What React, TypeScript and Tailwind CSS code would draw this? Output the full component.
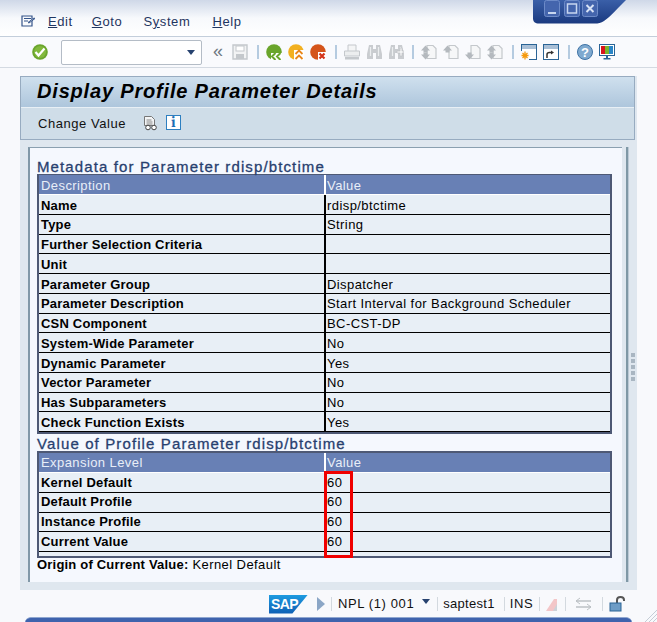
import React from "react";

const font = { fontFamily: '"Liberation Sans", Arial, sans-serif' };

function Sep({ className = "" }: { className?: string }) {
  return <div className={"w-[2px] h-[14px] bg-[#b5cbe0] shrink-0 " + className} />;
}

function Ico({ children, w = 16, h = 16, className = "" }: { children: React.ReactNode; w?: number; h?: number; className?: string }) {
  return (
    <svg width={w} height={h} viewBox={`0 0 ${w} ${h}`} className={"shrink-0 block " + className}>
      {children}
    </svg>
  );
}

const G = "#c4c8cc";

function PageArrow({ up, down, both }: { up?: boolean; down?: boolean; both?: boolean }) {
  return (
    <Ico>
      <path d="M6 1.500h6l3 3v10H6z" fill="#f6f7f8" stroke={G} strokeWidth="1.200" />
      {(up || both) && <path d="M0 6.500l4.500-5 4.500 5H6.500v2h-4v-2z" fill="#b4b9be" />}
      {(down || both) && <path d="M0 10.500l4.500 5 4.500-5H6.500v-2h-4v2z" fill="#b4b9be" />}
    </Ico>
  );
}

function Binocular({ plus }: { plus?: boolean }) {
  return (
    <Ico w={15}>
      <path d="M2 1h4v4h3V1h4l2 9v5H9V9H6v6H0v-5z" fill="#c9ccd0" />
      <path d="M3.500 3v9M11.500 3v9" stroke="#eceef0" strokeWidth="1.200" />
      {plus && <path d="M8 7h3V4h2v3h2v2h-2v3h-2V9H8z" fill="#f2f3f4" stroke="#bcc0c4" strokeWidth=".6" />}
    </Ico>
  );
}

function Row({ label, value, low }: { label: string; value?: string; low?: boolean }) {
  return (
    <div className={"flex h-[19.75px] border-b border-black bg-[#e8eff6] items-center text-[13px] text-black"}>
      <div className={"w-[287px] shrink-0 h-full flex items-center pl-[2px] border-r-2 border-black font-bold tracking-[0.2px] whitespace-nowrap " + (low ? "pt-[2px]" : "")}>
        {label}
      </div>
      <div className={"pl-[1px] tracking-[0.42px] whitespace-nowrap " + (low ? "pt-[2px]" : "")}>{value}</div>
    </div>
  );
}

function Head({ a, low }: { a: string; low?: boolean }) {
  return (
    <div className={"flex h-[20px] bg-[#6880b5] border-b border-white items-center text-[13px] text-[#e8eef8] tracking-[0.42px]"}>
      <div className={"w-[287px] shrink-0 h-full flex items-center pl-[2px] border-r-2 border-white " + (low ? "pt-[3px]" : "")}>{a}</div>
      <div className={"pl-[1px] " + (low ? "pt-[3px]" : "")}>Value</div>
    </div>
  );
}

const meta: [string, string?][] = [
  ["Name", "rdisp/btctime"],
  ["Type", "String"],
  ["Further Selection Criteria"],
  ["Unit"],
  ["Parameter Group", "Dispatcher"],
  ["Parameter Description", "Start Interval for Background Scheduler"],
  ["CSN Component", "BC-CST-DP"],
  ["System-Wide Parameter", "No"],
  ["Dynamic Parameter", "Yes"],
  ["Vector Parameter", "No"],
  ["Has Subparameters", "No"],
  ["Check Function Exists", "Yes"],
];

export default function App() {
  return (
    <div className="w-[657px] h-[622px] relative overflow-hidden bg-[#f8f9fc] flex flex-col" style={font}>
      {/* window controls */}
      <div className="absolute left-[530px] top-0">
        <svg width="100" height="26" viewBox="0 0 100 26" className="block">
          <defs>
            <linearGradient id="wc" x1="0" y1="0" x2="0" y2="1">
              <stop offset="0" stopColor="#3a5fa8" />
              <stop offset="1" stopColor="#1a3a80" />
            </linearGradient>
          </defs>
          <path d="M3 0h93C88 8 80 17 74 21c-3 2-6 2.500-9 2.500H9c-4 0-6-2-6-5z" fill="url(#wc)" />
          <rect x="14.500" y=".5" width="15" height="16" rx="2" fill="#4465ad" stroke="#6d8bc8" />
          <rect x="18" y="12" width="8" height="2" fill="#c7d6f0" />
          <rect x="34.500" y=".5" width="15" height="16" rx="2" fill="#4465ad" stroke="#6d8bc8" />
          <rect x="37.500" y="4" width="9" height="9" fill="none" stroke="#c7d6f0" strokeWidth="1.500" />
          <rect x="52.500" y=".5" width="15" height="16" rx="2" fill="#4465ad" stroke="#6d8bc8" />
          <path d="M56.500 5l7 7M63.500 5l-7 7" stroke="#d7e2f5" strokeWidth="2" />
        </svg>
      </div>

      {/* menu bar */}
      <div className="h-[37px] shrink-0 border-b border-[#c3cedb] bg-gradient-to-b from-[#cfd8e8] via-[#f7f9fc] to-white flex items-center pt-[7px] text-[13px] text-[#1f3560] tracking-[0.6px]">
        <div className="ml-[21px]">
          <Ico>
            <path d="M1 2h10v10H1zM3 4.500h7M3 7h4" fill="none" stroke="#34548a" strokeWidth="1.200" />
            <path d="M8 9l6-4.500-1-.5-6 4.500z" fill="#fff" stroke="#34548a" strokeWidth="1" />
          </Ico>
        </div>
        <span className="ml-[11px]"><u>E</u>dit</span>
        <span className="ml-[19px]"><u>G</u>oto</span>
        <span className="ml-[21px]">S<u>y</u>stem</span>
        <span className="ml-[22px]"><u>H</u>elp</span>
      </div>

      {/* toolbar */}
      <div className="h-[31px] shrink-0 border-b border-[#d4dae2] bg-[#f9fafd] flex items-center pl-[32px]">
        <Ico>
          <circle cx="8" cy="8" r="7.800" fill="#6aa52c" />
          <circle cx="8" cy="8" r="6" fill="#82b93c" />
          <path d="M3.500 8l3 3.500 6-7" fill="none" stroke="#fff" strokeWidth="2.200" />
        </Ico>
        <div className="ml-[13px] w-[141px] h-[25px] bg-white border border-[#b4bcc6] rounded-[2px] flex items-center justify-end pr-[6px]">
          <div className="w-0 h-0 border-x-[4.500px] border-x-transparent border-t-[5px] border-t-[#27426f]" />
        </div>
        <span className="ml-[11px] w-[10px] text-[18px] leading-none text-[#6e7882] mb-[3px]">«</span>
        <div className="ml-[9px]">
          <Ico>
            <path d="M1 1h14v14H1z" fill="#f2f3f4" stroke={G} strokeWidth="1.400" />
            <rect x="4" y="2" width="8" height="5" fill="#fff" stroke={G} />
            <rect x="4" y="10" width="8" height="5" fill={G} />
          </Ico>
        </div>
        <Sep className="ml-[9px]" />
        <div className="ml-[7px]">
          <Ico>
            <circle cx="8" cy="8" r="7.800" fill="#6aa52c" />
            <path d="M5 9h11v7H5z" fill="#fff" />
            <path d="M9.500 9L6 12.500 9.500 16M14.500 9L11 12.500 14.500 16" fill="none" stroke="#6aa52c" strokeWidth="2" />
          </Ico>
        </div>
        <div className="ml-[6px]">
          <Ico>
            <circle cx="8" cy="8" r="7.800" fill="#f2b020" />
            <path d="M6 6h10v10H6z" fill="#fff" />
            <path d="M7.500 10l3.500-3.500 3.500 3.500M7.500 15l3.500-3.500 3.500 3.500" fill="none" stroke="#e8861a" strokeWidth="1.800" />
          </Ico>
        </div>
        <div className="ml-[6px]">
          <Ico>
            <circle cx="8" cy="8" r="7.800" fill="#d4541a" />
            <path d="M8 8h8v8H8z" fill="#fff" />
            <path d="M9.500 9.500l5 5M14.500 9.500l-5 5" stroke="#d4341a" strokeWidth="2.200" />
          </Ico>
        </div>
        <Sep className="ml-[9px]" />
        <div className="ml-[7px]">
          <Ico>
            <path d="M4 7V1h8v6" fill="#f4f5f6" stroke={G} />
            <path d="M0.500 7h15v5h-15z" fill="#eceeef" stroke={G} />
            <rect x="1" y="13" width="14" height="2.500" fill={G} />
          </Ico>
        </div>
        <div className="ml-[7px]"><Binocular /></div>
        <div className="ml-[7px]"><Binocular plus /></div>
        <Sep className="ml-[8px]" />
        <div className="ml-[7px]"><PageArrow both /></div>
        <div className="ml-[6px]"><PageArrow up /></div>
        <div className="ml-[6px]"><PageArrow down /></div>
        <div className="ml-[6px]"><PageArrow both /></div>
        <Sep className="ml-[9px]" />
        <div className="ml-[7px]">
          <Ico>
            <rect x=".5" y=".5" width="15" height="15" fill="#fff" stroke="#2a6496" />
            <rect x="1" y="1" width="14" height="4" fill="#a9bfd6" />
            <rect x="0" y="7" width="8" height="9" fill="#f9fafd" />
            <path d="M4 7.500v8M.5 11.500h7M1.500 9l5 5M6.500 9l-5 5" stroke="#f59a0e" strokeWidth="1.300" />
          </Ico>
        </div>
        <div className="ml-[6px]">
          <Ico>
            <rect x=".5" y=".5" width="15" height="15" fill="#fff" stroke="#2a6496" />
            <rect x="1" y="1" width="14" height="4" fill="#a9bfd6" />
            <path d="M4 14v-3.500c0-1.500 1-2 2.500-2H9" fill="none" stroke="#333" strokeWidth="1.500" />
            <path d="M8 6.500l3 2-3 2z" fill="#333" />
          </Ico>
        </div>
        <Sep className="ml-[9px]" />
        <div className="ml-[7px]">
          <Ico>
            <circle cx="8" cy="8" r="7.500" fill="#7fa9cf" stroke="#3f73a6" />
            <text x="8" y="12.500" textAnchor="middle" fontSize="13" fontWeight="700" fill="#fff" fontFamily="Liberation Sans">?</text>
          </Ico>
        </div>
        <div className="ml-[6px]">
          <Ico>
            <rect x=".5" y=".5" width="15" height="11" fill="#fff" stroke="#2a6496" />
            <rect x="2" y="2" width="4" height="8" fill="#d8141c" />
            <rect x="6" y="2" width="4" height="8" fill="#7ab52c" />
            <rect x="10" y="2" width="4" height="8" fill="#2a86c8" />
            <path d="M7 12h2v2h2.500v1.500h-7V14H7z" fill="#2a6496" />
          </Ico>
        </div>
      </div>

      {/* main panel */}
      <div className="ml-[20px] mt-[8px] w-[617px] h-[514px] shrink-0 flex flex-col bg-[#dfe7ef]">
        <div className="h-[64px] shrink-0 mr-[2px] border border-[#97abc0] flex flex-col">
          <div className="h-[30px] shrink-0 bg-gradient-to-b from-[#cfe0ee] to-[#aec6dc] flex items-center pl-[16px] pb-[2px] text-[20px] font-bold italic text-black tracking-[0.82px] whitespace-nowrap">
            Display Profile Parameter Details
          </div>
          <div className="flex-1 border-t border-[#e8eff5] bg-[#cfdde8] flex items-center pl-[17px] text-[13px] text-[#111] tracking-[0.55px]">
            Change Value
            <div className="ml-[17px]">
              <Ico h={15} w={15}>
                <path d="M1.500 .5h7l3 3v6h-10z" fill="#f4f5f6" stroke="#777" />
                <path d="M3.500 4h5M3.500 6h6M3.500 8h6" stroke="#888" />
                <circle cx="5" cy="11.500" r="2.300" fill="#fff" stroke="#444" />
                <circle cx="11" cy="11.500" r="2.300" fill="#fff" stroke="#444" />
              </Ico>
            </div>
            <div className="ml-[8px] mb-[3px] w-[15px] h-[15px] border border-[#2d7fc0] bg-white flex items-center justify-center text-[15px] font-bold text-[#1a6fb5] leading-none font-serif">
              i
            </div>
          </div>
        </div>

        <div className="flex-1 flex pl-[8px] pt-[7px] pb-[8px]">
          <div className="w-[594px] h-full shrink-0 bg-[#f5f8fe] border-l-2 border-t border-[#8198a8] border-t-[#8ba0b0] pl-[7px] pr-[10px]">
            <div className="h-[26px] flex items-end text-[15px] text-[#28406f] [-webkit-text-stroke:0.3px_#28406f] tracking-[1.12px] whitespace-nowrap leading-[14px]">
              Metadata for Parameter rdisp/btctime
            </div>
            <div className="border-[2px] border-[#4e5975] border-t-[1px]">
              <Head a="Description" low />
              {meta.map(([l, v]) => (
                <Row key={l} label={l} value={v} low />
              ))}
            </div>
            <div className="h-[17px] flex items-end text-[15px] text-[#28406f] [-webkit-text-stroke:0.3px_#28406f] tracking-[1.12px] whitespace-nowrap leading-[14px]">
              Value of Profile Parameter rdisp/btctime
            </div>
            <div className="relative border-[2px] border-[#4e5975]">
              <Head a="Expansion Level" />
              <Row label="Kernel Default" value="60" />
              <Row label="Default Profile" value="60" />
              <Row label="Instance Profile" value="60" />
              <Row label="Current Value" value="60" />
              <div className="h-[4px] bg-[#e8eff6]" />
              <div className="absolute left-[285px] top-[18px] w-[29px] h-[87px] border-[3px] border-[#f00000]" />
            </div>
            <div className="text-[13px] text-black tracking-[0.42px] whitespace-nowrap leading-[14px]">
              <b className="tracking-[0.2px]">Origin of Current Value:</b> Kernel Default
            </div>
          </div>
          <div className="w-[3px] ml-[4px] h-full bg-[#7f98a6] border-r border-[#bccad6]" />
          <div className="flex flex-col gap-[2px] ml-[2px] mt-[206px]">
            {[0, 1, 2, 3, 4].map((i) => (
              <div key={i} className="w-[4px] h-[4px] bg-[#a9b6c2]" />
            ))}
          </div>
        </div>
      </div>

      {/* status bar */}
      <div className="h-[27px] shrink-0 flex items-center pl-[269px] text-[13px] text-[#111] tracking-[0.4px] whitespace-nowrap bg-[#f8f9fc]">
        <div className="relative w-[39px] h-[19px] mt-[1px]">
          <div className="absolute inset-0" style={{ clipPath: "polygon(0 0, 100% 0, 60% 100%, 0 100%)", background: "linear-gradient(#1e9be0,#0f5fb4)" }} />
          <span className="absolute left-[2px] top-[1px] text-[14px] leading-[17px] font-bold text-white tracking-[-0.6px]">SAP</span>
        </div>
        <div className="ml-[9px] w-0 h-0 border-y-[7px] border-y-transparent border-l-[8px] border-l-[#8ba6c6]" />
        <Sep className="ml-[6px] !w-[1px] !bg-[#d3d9df]" />
        <span className="ml-[6px] tracking-[0.6px]">NPL (1) 001</span>
        <div className="ml-[8px] mb-[4px] w-0 h-0 border-x-[4.500px] border-x-transparent border-t-[5px] border-t-[#27426f]" />
        <Sep className="ml-[7px] !w-[1px] !bg-[#d3d9df]" />
        <span className="ml-[5px] tracking-[0.3px]">saptest1</span>
        <Sep className="ml-[9px] !w-[1px] !bg-[#d3d9df]" />
        <span className="ml-[5px] tracking-[0.6px]">INS</span>
        <Sep className="ml-[6px] !w-[1px] !bg-[#d3d9df]" />
        <div className="ml-[6px]">
          <Ico w={12} h={14}>
            <path d="M0 14L8 2h3v12z" fill="#f3c6c8" />
            <path d="M7 14L11 7v7z" fill="#ccd2d8" />
          </Ico>
        </div>
        <Sep className="ml-[7px] !w-[1px] !bg-[#d3d9df]" />
        <div className="ml-[9px]">
          <Ico w={17} h={14}>
            <path d="M1 4h15M1 10h15" stroke="#bcc1c5" strokeWidth="1.500" />
            <path d="M5 1L1 4l4 3M12 7l4 3-4 3" fill="none" stroke="#bcc1c5" />
          </Ico>
        </div>
        <Sep className="ml-[10px] !w-[1px] !bg-[#d3d9df]" />
        <div className="ml-[6px]">
          <Ico w={17} h={16}>
            <path d="M8 8V4c0-2 1.500-3 3.500-3S15 2 15 4v1" fill="none" stroke="#555" strokeWidth="2" />
            <rect x="1" y="7" width="11" height="8" fill="#6d9cc6" stroke="#2a6496" />
          </Ico>
        </div>
      </div>

      {/* bottom window edge */}
      <div className="ml-[25px] w-[607px] h-[6px] rounded-t-[8px] bg-[#3f63ad] border-t border-[#8fa7d0] shrink-0" />
      <svg width="14" height="14" viewBox="0 0 14 14" className="absolute right-0 bottom-0">
        <path d="M2 14L14 2M6 14L14 6M10 14l4-4" stroke="#c5cdd6" />
      </svg>
    </div>
  );
}
